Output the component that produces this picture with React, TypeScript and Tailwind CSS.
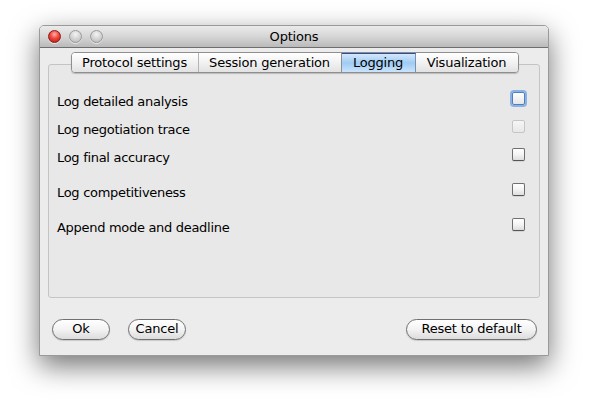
import React from "react";

const font = { fontFamily: '"DejaVu Sans", "Liberation Sans", sans-serif' };

function Light({ red }: { red?: boolean }) {
  return red ? (
    <div className="w-[13px] h-[13px] rounded-full border border-[#8a1a1a] bg-[radial-gradient(circle_at_50%_30%,#ffb0a8_0%,#f0453a_45%,#b01810_100%)] shadow-[0_1px_0_rgba(255,255,255,0.6)]" />
  ) : (
    <div className="w-[13px] h-[13px] rounded-full border border-[#9a9a9a] bg-[radial-gradient(circle_at_50%_30%,#f4f4f4_0%,#d4d4d4_50%,#b4b4b4_100%)] shadow-[0_1px_0_rgba(255,255,255,0.6)]" />
  );
}

function Checkbox({ kind }: { kind?: "focus" | "disabled" }) {
  if (kind === "focus")
    return (
      <div className="w-[13px] h-[13px] rounded-[2px] border border-[#4f7fc0] bg-gradient-to-b from-white to-[#e6e6e6] shadow-[0_0_0_2px_rgba(110,160,225,0.75)]" />
    );
  if (kind === "disabled")
    return (
      <div className="w-[13px] h-[13px] rounded-[2px] border border-[#c6c6c6] bg-gradient-to-b from-[#f6f6f6] to-[#e8e8e8]" />
    );
  return (
    <div className="w-[13px] h-[13px] rounded-[2px] border border-[#6f6f6f] border-b-[#555] bg-gradient-to-b from-white via-[#f4f4f4] to-[#dedede] shadow-[0_1px_0_rgba(0,0,0,0.08)]" />
  );
}

function Row({ label, mt, kind }: { label: string; mt: string; kind?: "focus" | "disabled" }) {
  return (
    <div className={`flex items-start justify-between h-[20px] ${mt}`}>
      <span className="leading-[20px] text-[13px] tracking-[-0.3px] text-black">{label}</span>
      <Checkbox kind={kind} />
    </div>
  );
}

function Button({ label, w }: { label: string; w: string }) {
  return (
    <div
      className={`${w} h-[21px] rounded-full border border-[#707070] bg-gradient-to-b from-white via-[#f3f3f3] to-[#dcdcdc] shadow-[0_1px_1px_rgba(0,0,0,0.15)] flex items-center justify-center text-[13px] tracking-[-0.2px] text-black pb-[1px]`}
    >
      {label}
    </div>
  );
}

export default function App() {
  return (
    <div className="w-[589px] h-[412px] bg-white pt-[25px] pl-[39px]" style={font}>
      <div className="w-[510px] h-[331px] bg-[#ececec] border border-[#9a9a9a] rounded-t-[5px] shadow-[0_10px_28px_rgba(0,0,0,0.55)] flex flex-col">
        {/* title bar */}
        <div className="relative h-[22px] rounded-t-[4px] bg-gradient-to-b from-[#ebebeb] via-[#d6d6d6] to-[#bababa] border-b border-[#6e6e6e] flex items-center">
          <div className="flex items-center gap-[8px] pl-[8px]">
            <Light red />
            <Light />
            <Light />
          </div>
          <div className="absolute inset-0 flex items-center justify-center text-[13px] tracking-[-0.2px] text-black">
            Options
          </div>
        </div>

        {/* body */}
        <div className="px-[8px] pt-[4px] flex flex-col">
          <div className="relative z-10 flex justify-center h-[21px] pl-[1px]">
            <div className="flex h-[21px] rounded-[4px] border border-[#8e8e8e] overflow-hidden shadow-[0_1px_1px_rgba(0,0,0,0.2)] text-[13px] tracking-[-0.2px] text-black">
              <div className="w-[127px] flex items-center justify-center bg-gradient-to-b from-white via-[#f2f2f2] to-[#e2e2e2] border-r border-[#b4b4b4]">
                Protocol settings
              </div>
              <div className="w-[143px] flex items-center justify-center bg-gradient-to-b from-white via-[#f2f2f2] to-[#e2e2e2] border-r border-[#8e8e8e]">
                Session generation
              </div>
              <div className="w-[74px] flex items-center justify-center bg-gradient-to-b from-[#d4e8fb] via-[#9fcbf3] to-[#cbe4fc] border-t border-t-[#2d4c9a] border-r border-[#7a8fb0]">
                Logging
              </div>
              <div className="w-[102px] flex items-center justify-center bg-gradient-to-b from-white via-[#f2f2f2] to-[#e2e2e2]">
                Visualization
              </div>
            </div>
          </div>
          <div className="-mt-[9px] h-[234px] rounded-[3px] border border-[#c4c4c4] bg-[#e8e8e8] pt-[27px] pl-[8px] pr-[14px]">
            <Row label="Log detailed analysis" mt="mt-0" kind="focus" />
            <Row label="Log negotiation trace" mt="mt-[8px]" kind="disabled" />
            <Row label="Log final accuracy" mt="mt-[8px]" />
            <Row label="Log competitiveness" mt="mt-[15px]" />
            <Row label="Append mode and deadline" mt="mt-[15px]" />
          </div>
        </div>

        {/* buttons */}
        <div className="flex items-center mt-[21px] pl-[12px] pr-[11px]">
          <Button label="Ok" w="w-[58px]" />
          <div className="w-[18px]" />
          <Button label="Cancel" w="w-[58px]" />
          <div className="flex-1" />
          <Button label="Reset to default" w="w-[131px]" />
        </div>
      </div>
    </div>
  );
}
